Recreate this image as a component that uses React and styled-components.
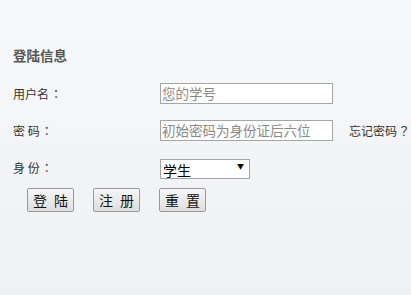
import React from 'react';
import styled, { createGlobalStyle } from 'styled-components';

const GlobalStyle = createGlobalStyle`
    html, body {
        margin: 0;
        padding: 0;
        height: 100%;
    }
    body {
        background: linear-gradient(#f8f9fb, #eef0f3);
        font-family: "Noto Sans CJK SC", "Liberation Sans", sans-serif;
        color: #333;
    }
`

const Page = styled.div`
    height: 295px;
    padding: 45px 0 0 13px;
    box-sizing: border-box;
`

const Title = styled.div`
    font-size: 13.5px;
    font-weight: bold;
    color: #555;
    line-height: 20px;
    margin-bottom: 17px;
`

const Form = styled.div`
    display: flex;
    flex-direction: column;
    gap: 15px;
`

const Row = styled.div`
    display: grid;
    grid-template-columns: 147px auto auto;
    align-items: center;
    justify-content: start;
    height: 22px;
`

const Label = styled.span`
    font-size: 12px;
    color: #333;
`

// centred full-width punctuation, as in the original page
const Punct = styled.span`
    font-family: "Noto Sans CJK TC", sans-serif;
    margin-left: 1px;
`

const Input = styled.input`
    width: 173px;
    height: 21px;
    box-sizing: border-box;
    border: 1px solid #a5a5a5;
    background: #fff;
    padding: 0 1px;
    font-family: inherit;
    font-size: 13.5px;
    outline: none;
    &::placeholder {
        color: #8a8a8a;
    }
`

const Link = styled.a`
    margin-left: 16px;
    font-size: 12px;
    color: #333;
    text-decoration: none;
    cursor: pointer;
`

const SelectBox = styled.div`
    position: relative;
    width: 90px;
    height: 20px;
`

const Select = styled.select`
    appearance: none;
    width: 90px;
    height: 20px;
    box-sizing: border-box;
    border: 1px solid #a5a5a5;
    border-radius: 0;
    background: #fff;
    padding: 0 0 0 2px;
    font-family: inherit;
    font-size: 14px;
    color: #000;
    outline: none;
`

const Arrow = styled.span`
    position: absolute;
    right: 6px;
    top: 4px;
    font-size: 7px;
    line-height: 10px;
    color: #000;
    pointer-events: none;
`

const Buttons = styled.div`
    display: flex;
    gap: 19px;
    margin: 10px 0 0 14px;
`

const Button = styled.button`
    width: 47px;
    height: 24px;
    box-sizing: border-box;
    border: 1px solid #9a9a9a;
    border-radius: 2px;
    background: linear-gradient(#f6f6f6, #dedede);
    font-family: inherit;
    font-size: 14px;
    letter-spacing: 2px;
    text-indent: 2px;
    color: #111;
    padding: 0;
    cursor: pointer;
`

export default function App() {
    return (
        <>
            <GlobalStyle/>
            <Page>
                <Title>登陆信息</Title>
                <Form>
                    <Row>
                        <Label>用户名<Punct>：</Punct></Label>
                        <Input placeholder="您的学号"/>
                    </Row>
                    <Row>
                        <Label>密 码<Punct>：</Punct></Label>
                        <Input type="password" placeholder="初始密码为身份证后六位"/>
                        <Link>忘记密码<Punct>？</Punct></Link>
                    </Row>
                    <Row>
                        <Label>身 份<Punct>：</Punct></Label>
                        <SelectBox>
                            <Select defaultValue="student">
                                <option value="student">学生</option>
                                <option value="teacher">教师</option>
                            </Select>
                            <Arrow>▼</Arrow>
                        </SelectBox>
                    </Row>
                </Form>
                <Buttons>
                    <Button>登 陆</Button>
                    <Button>注 册</Button>
                    <Button>重 置</Button>
                </Buttons>
            </Page>
        </>
    )
}
